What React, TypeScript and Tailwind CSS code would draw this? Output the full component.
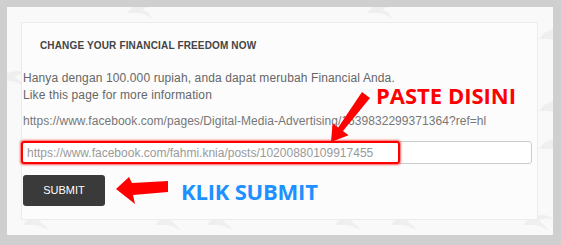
import React from "react";

function Bird({ x, y }: { x: number; y: number }) {
  return (
    <path
      transform={`translate(${x},${y})`}
      d="M0,12 Q6,2 18,2 Q26,2 30,6 Q22,4 16,8 Q22,12 26,18 Q18,12 10,12 Q6,12 0,12 Z"
      fill="#efefef"
    />
  );
}

export default function App() {
  const sans = { fontFamily: '"Liberation Sans", Arial, sans-serif' };
  const birds = [
    [16, 206], [148, 206], [200, 206], [328, 206], [384, 206], [516, 206],
    [-8, 62], [532, 20], [532, 92], [532, 130], [360, -6], [120, -6],
  ];
  return (
    <div
      className="relative w-[561px] h-[245px] bg-[#cfcfcf] pl-[7px] pt-[7px] pr-[8px] pb-[10px] overflow-hidden"
      style={sans}
    >
      <div className="relative w-full h-full bg-[#f9f9f9] pl-[14px] pt-[15px] pr-[15px] pb-[15px] overflow-hidden">
        <svg
          className="absolute left-0 top-0"
          width="546"
          height="228"
          viewBox="0 0 546 228"
        >
          {birds.map(([x, y], i) => (
            <Bird key={i} x={x} y={y} />
          ))}
        </svg>
        <div className="relative w-full h-[198px] border border-[#ececec] bg-[#fcfcfc] pr-[5px]">
          <div className="pl-[18px] pt-[17px] text-[10px] leading-[12px] font-bold text-[#444] tracking-[0.15px]">
            CHANGE YOUR FINANCIAL FREEDOM NOW
          </div>
          <div className="mt-[18px] pl-[1px] text-[12px] leading-[17px] text-[#666] tracking-[0.12px]">
            <div>Hanya dengan 100.000 rupiah, anda dapat merubah Financial Anda.</div>
            <div>Like this page for more information</div>
          </div>
          <div className="mt-[9px] pl-[1px] text-[12px] leading-[17px] text-[#777] whitespace-nowrap tracking-[0.05px]">
            https://www.facebook.com/pages/Digital-Media-Advertising/1639832299371364?ref=hl
          </div>
          <div className="relative mt-[11px]">
            <div className="h-[23px] w-full border border-[#cccccc] rounded-[3px] bg-white flex items-center pl-[4px] text-[12px] text-[#999] whitespace-nowrap">
              https://www.facebook.com/fahmi.knia/posts/10200880109917455
            </div>
            <div className="absolute left-[-1px] top-0 w-[379px] h-[23px] border-[2px] border-[#ff0000] rounded-[3px] shadow-[0_0_2px_1px_rgba(255,0,0,0.6)]" />
          </div>
          <div className="mt-[11px] pl-[1px] flex items-center">
            <div className="w-[82px] h-[31px] rounded-[3px] bg-[#3a3a3a] text-white text-[11px] flex items-center justify-center">
              SUBMIT
            </div>
            <svg width="56" height="30" viewBox="0 0 56 30" className="ml-[10px]">
              <polygon
                points="1,13 14,1 17,7 53,5 53,16 18,19 20,28"
                fill="#ff0000"
              />
            </svg>
            <div
              className="ml-[10px] text-[22px] leading-[24px] font-bold text-[#1e90ff] tracking-[-0.2px]"
              style={{ fontFamily: '"Open Sans", sans-serif' }}
            >
              KLIK SUBMIT
            </div>
          </div>
        </div>
      </div>
      <svg
        className="absolute left-0 top-0 pointer-events-none"
        width="561"
        height="245"
        viewBox="0 0 561 245"
      >
        <polygon
          points="331,142 332.6,123.2 338.2,127.4 362,92 370,98 343,131 348.6,135.2"
          fill="#ff0000"
        />
      </svg>
      <div
        className="absolute left-[376px] top-[83px] text-[22px] leading-[24px] font-bold text-[#ff0000] whitespace-nowrap"
        style={{ fontFamily: '"Open Sans", sans-serif' }}
      >
        PASTE DISINI
      </div>
    </div>
  );
}
